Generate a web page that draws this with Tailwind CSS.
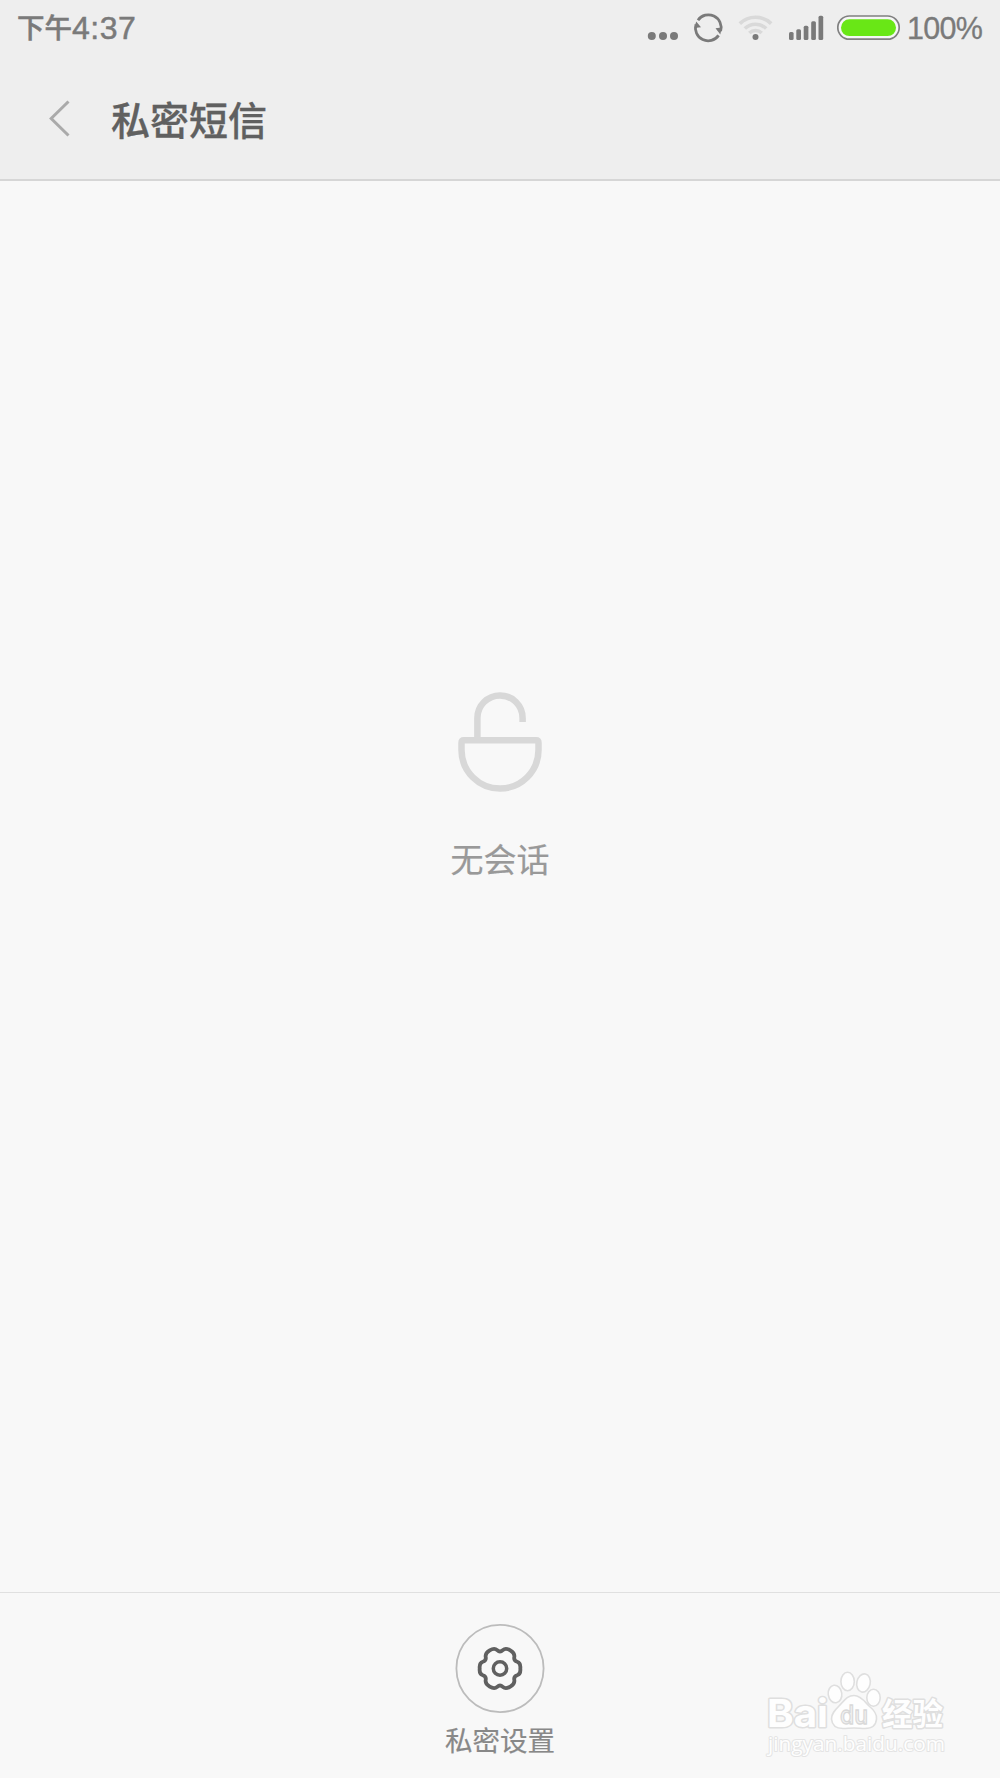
<!DOCTYPE html>
<html lang="zh-CN">
  <head>
    <meta charset="UTF-8" />
    <meta name="viewport" content="width=device-width, initial-scale=1.0" />
    <title>私密短信</title>
    <script src="https://cdn.jsdelivr.net/npm/@tailwindcss/browser@4"></script>
  </head>
  <body class="bg-[#f8f8f8] font-['Liberation_Sans','Noto_Sans_CJK_SC',sans-serif]">
    <div class="relative flex flex-col w-[1000px] h-[1778px] overflow-hidden">
      <!-- Header -->
      <header class="h-[181px] shrink-0 bg-[#eeeeee] border-b-2 border-[#d6d6d6]">
        <!-- Status bar -->
        <div class="flex items-center justify-between h-14 px-[17px] text-[#7a7a7a]">
          <div class="flex items-center leading-none font-medium [-webkit-text-stroke:0.5px]">
            <span class="pt-0.5 text-[27.5px]">下午</span>
            <span class="text-[32px] tracking-[0.5px]">4:37</span>
          </div>
          <div class="flex items-center">
            <svg class="w-[260px] h-14" viewBox="645 0 260 56" fill="none">
              <g fill="#7a7a7a">
                <circle cx="651.8" cy="36" r="4" />
                <circle cx="663" cy="36" r="4" />
                <circle cx="674" cy="36" r="4" />
              </g>
              <!-- sync -->
              <g stroke="#7a7a7a" stroke-width="2.8">
                <path d="M698 20.2A12.7 12.7 0 0 1 720.6 31" />
                <path d="M718.6 35.4A12.7 12.7 0 0 1 696 24.5" />
              </g>
              <path fill="#7a7a7a" d="M715.5 28.2 721.8 27.6 720.3 34.5ZM696.2 21.6 701 27.3 694.3 28Z" />
              <!-- wifi -->
              <g stroke="#d9d9d9" stroke-width="3.6">
                <path d="M739.8 23.6A22.5 22.5 0 0 1 771.2 23.6" />
                <path d="M744.8 28.5A15.5 15.5 0 0 1 766.2 28.5" />
                <path d="M749.3 33A9 9 0 0 1 761.7 33" />
              </g>
              <circle cx="755.5" cy="37" r="3" fill="#7a7a7a" />
              <!-- signal -->
              <g fill="#7a7a7a">
                <rect x="789" y="32" width="4.6" height="8" rx="1.5" />
                <rect x="796.3" y="29.3" width="4.7" height="10.7" rx="1.5" />
                <rect x="803.7" y="25.8" width="4.7" height="14.2" rx="1.5" />
                <rect x="811.2" y="21.2" width="4.7" height="18.8" rx="1.5" />
                <rect x="818.5" y="15.7" width="4.7" height="24.3" rx="1.5" />
              </g>
              <!-- battery -->
              <rect x="837.8" y="16" width="61.4" height="23.2" rx="11.6" stroke="#808080" stroke-width="1.7" fill="#f6f6f6" />
              <rect x="841" y="19.3" width="55" height="16.8" rx="8.4" fill="#69e716" />
            </svg>
            <span class="w-[78px] pl-0.5 text-[30.5px] leading-none tracking-[-0.7px] [-webkit-text-stroke:0.3px]">100%</span>
          </div>
        </div>
        <!-- Title bar -->
        <div class="flex items-center h-[123px] pl-12">
          <svg class="w-6 h-10" viewBox="0 0 24 40" fill="none" stroke="#aaaaaa" stroke-width="3">
            <path d="M20.5 3.5 3.2 20.5 20.5 37.5" />
          </svg>
          <h1 class="ml-[39px] pt-2 text-[39px] leading-none font-medium text-[#606060] [-webkit-text-stroke:0.3px]">私密短信</h1>
        </div>
      </header>

      <!-- Empty state -->
      <main class="flex flex-1 flex-col items-center pt-[509px]">
        <svg class="w-[86px] h-[104px]" viewBox="457 690 86 104" fill="none" stroke="#d8d8d8" stroke-width="6.5">
          <path d="M477.4 740V718A22.6 22.6 0 0 1 522.6 718V722" />
          <path d="M464 740.3H536Q538.5 740.3 538.5 743V750A38.5 38.5 0 0 1 461.5 750V743Q461.5 740.3 464 740.3Z" />
        </svg>
        <p class="mt-[50px] text-[33px] leading-none text-[#999999] [-webkit-text-stroke:0.2px]">无会话</p>
      </main>

      <!-- Bottom bar -->
      <footer class="relative flex flex-col items-center h-[186px] shrink-0 pt-[31px] border-t border-[#e0e0e0]">
        <svg class="w-[90px] h-[90px]" viewBox="-45 -44.5 90 90" fill="none">
          <circle r="43.6" stroke="#bcbcbc" stroke-width="1.8" />
          <path
            stroke="#606060"
            stroke-width="3.8"
            d="M20.3 0Q20.9 5.6 17.2 6.7Q13.6 7.8 14.3 11.5Q15 15.3 10.3 18.1Q5.6 20.9 2.8 18.3Q0 15.7 -2.8 18.3Q-5.6 20.9 -10.3 18.1Q-15 15.3 -14.3 11.5Q-13.6 7.8 -17.2 6.7Q-20.9 5.6 -20.3 0Q-20.9 -5.6 -17.2 -6.7Q-13.6 -7.8 -14.3 -11.5Q-15 -15.3 -10.3 -18.1Q-5.6 -20.9 -2.8 -18.3Q0 -15.7 2.8 -18.3Q5.6 -20.9 10.3 -18.1Q15 -15.3 14.3 -11.5Q13.6 -7.8 17.2 -6.7Q20.9 -5.6 20.3 0Z"
          />
          <circle r="6.7" stroke="#606060" stroke-width="3.5" />
        </svg>
        <p class="mt-3.5 text-[27.5px] leading-none text-[#888888] [-webkit-text-stroke:0.2px]">私密设置</p>

        <!-- Watermark -->
        <svg class="absolute left-[760px] top-[70px] w-[200px] h-[100px]" viewBox="760 1662 200 100" fill="#fefefe" stroke="#dfdfdf">
          <g stroke-width="3" paint-order="stroke" stroke-linejoin="round">
            <text x="767" y="1725.5" font-family="Inter" font-weight="700" font-size="38" textLength="61" lengthAdjust="spacingAndGlyphs">Bai</text>
            <text x="882" y="1724" font-family="Noto Sans CJK SC" font-weight="bold" font-size="30.5">经验</text>
            <text x="768" y="1750" font-family="Open Sans" font-size="20.5" stroke-width="2" stroke="#e4e4e4" textLength="177" lengthAdjust="spacingAndGlyphs">jingyan.baidu.com</text>
          </g>
          <g stroke-width="1.6">
            <ellipse cx="835" cy="1693" rx="6.8" ry="8.8" transform="rotate(-8 835 1693)" />
            <ellipse cx="847.6" cy="1680.5" rx="6.7" ry="9.2" />
            <ellipse cx="863.5" cy="1682" rx="6.7" ry="9.2" transform="rotate(12 863.5 1682)" />
            <ellipse cx="873.5" cy="1696.8" rx="6.7" ry="8.5" />
            <path d="M854 1694.5C861 1694.5 865 1701 869 1705C874 1709 877 1713 876.5 1718C876 1725 871 1727.5 865 1727.5C861 1727.5 858 1727 854 1727C850 1727 847 1727.5 843 1727.5C836 1727.5 832 1724 831.5 1718C831 1713 835 1709 839 1705C844 1700 847 1694.5 854 1694.5Z" />
          </g>
          <text x="840" y="1722.5" font-family="Inter" font-weight="500" font-size="25" fill="#f2f2f2" stroke="#d9d9d9" stroke-width="1.3" textLength="28" lengthAdjust="spacingAndGlyphs">du</text>
        </svg>
      </footer>
    </div>
  </body>
</html>
